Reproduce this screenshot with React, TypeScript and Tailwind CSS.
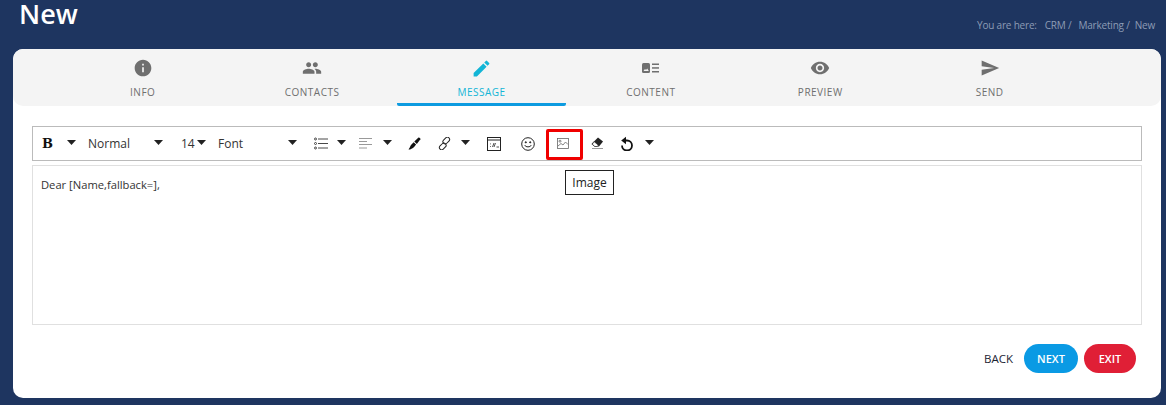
import { MdInfo, MdPeople, MdEdit, MdRemoveRedEye, MdSend } from 'react-icons/md';
import type { ReactNode } from 'react';

function ContentIcon() {
    return (
        <svg width="17" height="10" viewBox="0 0 17 10" fill="#6f6f6f">
            <rect x="0" y="0" width="8" height="10" rx="1.500" />
            <path d="M1.500 8l1.500-2 1 1 1.200-1.600L6.800 8z" fill="#f4f4f4" />
            <rect x="10" y=".5" width="7" height="1.500" />
            <rect x="10" y="4.200" width="7" height="1.500" />
            <rect x="10" y="8" width="7" height="1.500" />
        </svg>
    );
}

const tabs: { label: string; icon: ReactNode; active?: boolean }[] = [
    { label: 'INFO', icon: <MdInfo size={20} /> },
    { label: 'CONTACTS', icon: <MdPeople size={20} /> },
    { label: 'MESSAGE', icon: <MdEdit size={21} />, active: true },
    { label: 'CONTENT', icon: <ContentIcon /> },
    { label: 'PREVIEW', icon: <MdRemoveRedEye size={20} /> },
    { label: 'SEND', icon: <MdSend size={20} /> },
];

function Caret() {
    return <span className="w-[9px] h-[5px] mb-[2px] shrink-0 bg-[#222] [clip-path:polygon(0_0,100%_0,50%_100%)]"></span>;
}

function ListIcon() {
    return (
        <svg width="14" height="13" viewBox="0 0 14 13" fill="none" stroke="#333" strokeWidth=".9">
            <circle cx="1.500" cy="2" r="1" />
            <circle cx="1.500" cy="6.500" r="1" />
            <circle cx="1.500" cy="11" r="1" />
            <path d="M4 2h10M4 6.500h10M4 11h10" />
        </svg>
    );
}

function AlignIcon() {
    return (
        <svg width="14" height="13" viewBox="0 0 14 13" fill="none" stroke="#999" strokeWidth="1">
            <path d="M0 1.500h13M0 4.500h8M0 7.500h13M0 11h8" />
        </svg>
    );
}

function BrushIcon() {
    return (
        <svg width="13" height="13" viewBox="0 0 13 13" fill="#111">
            <path d="M10.500.5c.8-.4 2.300.9 1.900 1.800L8.800 7 6.300 4.500z" />
            <path d="M5.700 5.200l2.400 2.400-2 2.300C4.800 11.300 2.500 12.500.5 12.500c1.300-1.300 1.600-3 2.500-4.400z" />
        </svg>
    );
}

function LinkIcon() {
    return (
        <svg width="13" height="13" viewBox="0 0 13 13" fill="none" stroke="#222" strokeWidth="1">
            <rect x="6" y="-.2" width="4.500" height="7.500" rx="2.200" transform="rotate(45 8.250 3.550)" />
            <rect x="2.500" y="5.700" width="4.500" height="7.500" rx="2.200" transform="rotate(45 4.750 9.450)" />
        </svg>
    );
}

function CodeIcon() {
    return (
        <svg width="14" height="14" viewBox="0 0 14 14" fill="none" stroke="#222" strokeWidth="1">
            <rect x=".5" y=".5" width="13" height="13" />
            <path d="M.5 3h13" />
            <path d="M3.500 6.500v.8M3.500 9v.8M5.500 10l1.500-4M7 10l1.500-4M9.500 10h2.500" strokeWidth=".8" />
        </svg>
    );
}

function SmileIcon() {
    return (
        <svg width="14" height="14" viewBox="0 0 14 14" fill="none" stroke="#222" strokeWidth="1">
            <circle cx="7" cy="7" r="6.300" />
            <circle cx="4.800" cy="5.300" r=".6" fill="#222" />
            <circle cx="9.200" cy="5.300" r=".6" fill="#222" />
            <path d="M3.800 8.200c.8 2.200 5.600 2.200 6.400 0" />
        </svg>
    );
}

function ImageIcon() {
    return (
        <svg width="12" height="11" viewBox="0 0 12 11" fill="none" stroke="#666" strokeWidth=".8">
            <rect x=".5" y=".5" width="11" height="10" />
            <circle cx="3" cy="3.200" r="1" />
            <path d="M1 8l3-2.500 2 1.500 2.500-3L11 6.500" />
        </svg>
    );
}

function EraserIcon() {
    return (
        <svg width="14" height="13" viewBox="0 0 14 13">
            <path d="M8 .5l5 4-4 5H4.500L1.500 7z" fill="#222" />
            <path d="M4 4.500l4.500 3.800L7 9.500H4.800L2.300 7.200z" fill="#fff" stroke="#222" strokeWidth=".7" />
            <rect x="2" y="11" width="11" height="1" fill="#999" />
        </svg>
    );
}

function UndoIcon() {
    return (
        <svg width="14" height="15" viewBox="0 0 14 15" fill="none" stroke="#111" strokeWidth="1.800">
            <path d="M4 4.500h3a5 5 0 1 1-5 5" />
            <path d="M6 .8v7.400L1.200 4.500z" fill="#111" stroke="none" />
        </svg>
    );
}

export default function App() {
    return (
        <div className="w-[1166px] h-[405px] overflow-hidden bg-[#1e3560] font-['Open_Sans',sans-serif]">
            <div className="flex justify-between h-[49px] pl-[19px] pr-[11px]">
                <h1 className="text-[27px] leading-[28px] font-semibold text-white">New</h1>
                <div className="flex mt-[17px] h-[16px] text-[10px] leading-[16px] text-[#8d9cb5] tracking-[-0.2px]">
                    <span className="mr-2">You are here:</span>
                    <span className="mr-[7px]">CRM /</span>
                    <span className="mr-[5px]">Marketing /</span>
                    <span>New</span>
                </div>
            </div>

            <div className="ml-[13px] w-[1148px] h-[349px] bg-white rounded-[10px] flex flex-col">
                <div className="flex h-[57px] pl-[45px] bg-[#f4f4f4] rounded-[10px]">
                    {tabs.map((tab) => (
                        <div
                            key={tab.label}
                            className={`w-[169.4px] h-[57px] flex flex-col items-center ${tab.active ? 'border-b-[3px] border-[#0d9be0] rounded-b-[2px] text-[#12b5d6]' : 'text-[#6f6f6f]'}`}
                        >
                            <span className="h-[20px] mt-[9px] flex items-center">{tab.icon}</span>
                            <span className="mt-[7px] text-[10px] leading-[14px] tracking-[0.5px]">{tab.label}</span>
                        </div>
                    ))}
                </div>

                <div className="mt-5 mx-[19px] h-[35px] border border-[#bbbbbb] flex items-center text-[12px] text-[#333] relative">
                    <span className="ml-[9px] w-[25px] font-['DejaVu_Serif',serif] font-bold text-[13px] text-[#111]">B</span>
                    <Caret />
                    <span className="ml-[12px] w-[66px]">Normal</span>
                    <Caret />
                    <span className="ml-[18px] w-[16px]">14</span>
                    <Caret />
                    <span className="ml-[12px] w-[70px]">Font</span>
                    <Caret />
                    <span className="ml-[17px] w-[23px]"><ListIcon /></span>
                    <Caret />
                    <span className="ml-[13px] w-[24px]"><AlignIcon /></span>
                    <Caret />
                    <span className="ml-[16px] w-[30px]"><BrushIcon /></span>
                    <span className="w-[23px]"><LinkIcon /></span>
                    <Caret />
                    <span className="ml-[17px] w-[34px]"><CodeIcon /></span>
                    <span className="w-[36px]"><SmileIcon /></span>
                    <span className="w-[33px]"><ImageIcon /></span>
                    <span className="w-[30px]"><EraserIcon /></span>
                    <span className="w-[25px]"><UndoIcon /></span>
                    <Caret />
                    <span className="absolute left-[513px] top-[2px] w-[37px] h-[31px] border-[3px] border-[#f00000] rounded-[2px]"></span>
                    <span className="absolute left-[532px] top-[43px] w-[49px] h-[25px] border border-[#222] bg-white text-[12px] leading-[23px] text-center text-[#222]">Image</span>
                </div>

                <div className="mt-[4px] mx-[19px] h-[160px] border border-[#e0e0e0] pl-2 pt-[10px] text-[11.2px] leading-[18px] text-[#333]">
                    Dear [Name,fallback=],
                </div>

                <div className="flex justify-end items-center mt-[19px] mr-[25px] text-[11px]">
                    <span className="mr-[11px] text-[11.500px] text-[#1c2433]">BACK</span>
                    <span className="w-[54px] h-[29px] rounded-full bg-[#0a9ae4] text-white font-semibold leading-[29px] text-center">NEXT</span>
                    <span className="ml-[6px] w-[52px] h-[29px] rounded-full bg-[#e01f36] text-white font-semibold leading-[29px] text-center">EXIT</span>
                </div>
            </div>
        </div>
    );
}
